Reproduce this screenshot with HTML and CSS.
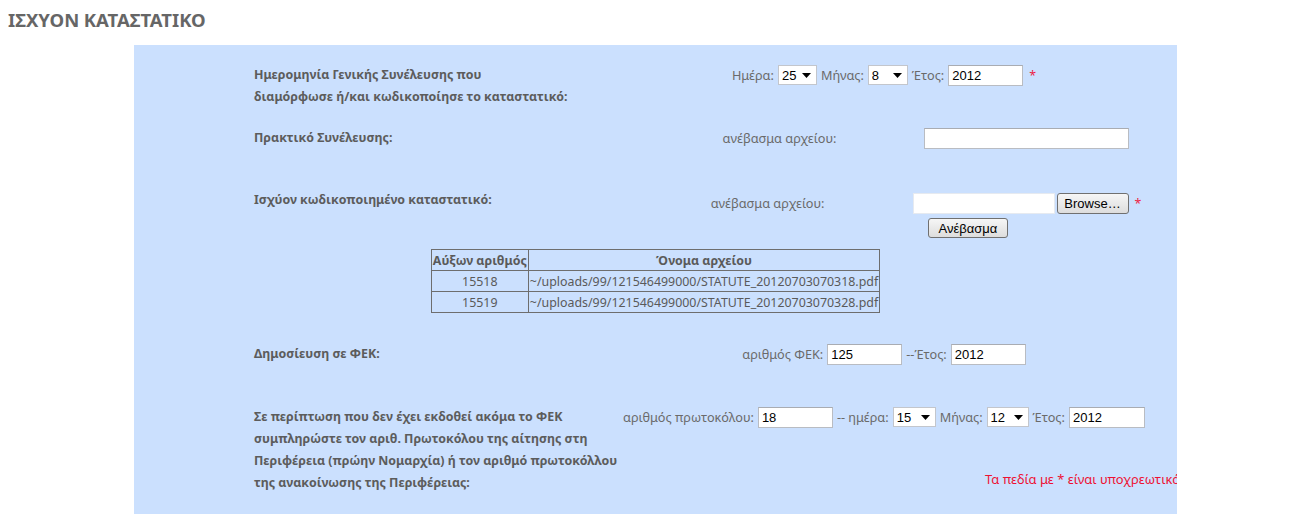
FILE: index.html
```html
<!DOCTYPE html>
<html lang="el">
<head>
    <meta charset="UTF-8">
    <meta name="viewport" content="width=device-width, initial-scale=1.0">
    <title>ΙΣΧΥΟΝ ΚΑΤΑΣΤΑΤΙΚΟ</title>
    <link rel="stylesheet" href="styles.css">
</head>
<body>
    <div class="page-title">ΙΣΧΥΟΝ ΚΑΤΑΣΤΑΤΙΚΟ</div>
    <div class="panel">
        <div class="form-row row-date">
            <div class="row-label">Ημερομηνία Γενικής Συνέλευσης που<br>διαμόρφωσε ή/και κωδικοποίησε το καταστατικό:</div>
            <div class="row-fields">
                <div class="field-line">
                    <span class="field-label">Ημέρα:</span>
                    <span class="select-wrap sel-day"><select class="select"><option>25</option></select><svg class="select-arrow" width="9" height="5" viewBox="0 0 9 5"><path d="M0 0h9L4.5 5z"/></svg></span>
                    <span class="field-label">Μήνας:</span>
                    <span class="select-wrap sel-month"><select class="select"><option>8</option></select><svg class="select-arrow" width="9" height="5" viewBox="0 0 9 5"><path d="M0 0h9L4.5 5z"/></svg></span>
                    <span class="field-label">Έτος:</span>
                    <input class="text-input w-year" type="text" value="2012">
                    <span class="required">*</span>
                </div>
            </div>
        </div>

        <div class="form-row row-minutes">
            <div class="row-label">Πρακτικό Συνέλευσης:</div>
            <div class="row-fields upload">
                <div class="field-line">
                    <span class="field-label upload-label">ανέβασμα αρχείου:</span>
                    <input class="text-input w-upload" type="text">
                </div>
            </div>
        </div>

        <div class="form-row row-statute">
            <div class="row-label">Ισχύον κωδικοποιημένο καταστατικό:</div>
            <div class="row-fields upload">
                <div class="field-line file-line">
                    <span class="field-label upload-label">ανέβασμα αρχείου:</span>
                    <span class="file-box">
                        <input class="text-input w-file" type="text">
                        <button class="btn btn-browse" type="button">Browse…</button>
                    </span>
                    <span class="required">*</span>
                </div>
                <div class="upload-action">
                    <button class="btn btn-upload" type="button">Ανέβασμα</button>
                </div>
            </div>
        </div>

        <table class="files">
            <tr>
                <th class="col-id">Αύξων αριθμός</th>
                <th>Όνομα αρχείου</th>
            </tr>
            <tr>
                <td class="col-id">15518</td>
                <td>~/uploads/99/121546499000/STATUTE_20120703070318.pdf</td>
            </tr>
            <tr>
                <td class="col-id">15519</td>
                <td>~/uploads/99/121546499000/STATUTE_20120703070328.pdf</td>
            </tr>
        </table>

        <div class="form-row row-fek">
            <div class="row-label">Δημοσίευση σε ΦΕΚ:</div>
            <div class="row-fields">
                <div class="field-line">
                    <span class="field-label">αριθμός ΦΕΚ:</span>
                    <input class="text-input w-year" type="text" value="125">
                    <span class="field-label">--Έτος:</span>
                    <input class="text-input w-year" type="text" value="2012">
                </div>
            </div>
        </div>

        <div class="form-row row-protocol">
            <div class="row-label">Σε περίπτωση που δεν έχει εκδοθεί ακόμα το ΦΕΚ<br>συμπληρώστε τον αριθ. Πρωτοκόλου της αίτησης στη<br>Περιφέρεια (πρώην Νομαρχία) ή τον αριθμό πρωτοκόλλου<br>της ανακοίνωσης της Περιφέρειας:</div>
            <div class="row-fields">
                <div class="field-line">
                    <span class="field-label">αριθμός πρωτοκόλου:</span>
                    <input class="text-input w-year" type="text" value="18">
                    <span class="field-label">-- ημέρα:</span>
                    <span class="select-wrap sel-day2"><select class="select"><option>15</option></select><svg class="select-arrow" width="9" height="5" viewBox="0 0 9 5"><path d="M0 0h9L4.5 5z"/></svg></span>
                    <span class="field-label">Μήνας:</span>
                    <span class="select-wrap sel-month2"><select class="select"><option>12</option></select><svg class="select-arrow" width="9" height="5" viewBox="0 0 9 5"><path d="M0 0h9L4.5 5z"/></svg></span>
                    <span class="field-label">Έτος:</span>
                    <input class="text-input w-year2" type="text" value="2012">
                </div>
                <div class="required-note">Τα πεδία με * είναι υποχρεωτικά</div>
            </div>
        </div>
    </div>
</body>
</html>
```

FILE: styles.css
```css
body {
    margin: 0;
    padding: 0;
    background-color: #ffffff;
    font-family: "Noto Sans", "Open Sans", sans-serif;
    font-size: 12.4px;
    color: #555555;
}
.page-title {
    font-size: 18.5px;
    font-weight: bold;
    color: #666666;
    padding: 9px 0 0 8px;
    height: 45px;
    box-sizing: border-box;
    line-height: 22px;
}
.panel {
    background-color: #cbe0fe;
    margin-left: 134px;
    width: 1043px;
    padding-top: 19px;
    padding-bottom: 20px;
    overflow: hidden;
}
.form-row {
    display: flex;
    padding-left: 120px;
}
.row-label {
    width: 366px;
    flex-shrink: 0;
    font-weight: bold;
    line-height: 22px;
    color: #5c5c5c;
    white-space: nowrap;
}
.row-fields {
    flex: 1;
    min-width: 0;
    display: flex;
    flex-direction: column;
    padding-right: 29px;
}
.row-fields.upload {
    padding-left: 55px;
    padding-right: 0;
}
.field-line {
    display: flex;
    align-items: center;
    justify-content: center;
    height: 22px;
    gap: 4px;
}
.field-label {
    color: #6a6a6a;
    white-space: nowrap;
    font-size: 12.7px;
}
.upload-label {
    margin-right: 84px;
}
.text-input {
    box-sizing: border-box;
    height: 21px;
    border: 1px solid #b9bcc2;
    border-top-color: #a9acb2;
    background: #ffffff;
    font-family: "Liberation Sans", Arial, sans-serif;
    font-size: 13px;
    color: #000000;
    padding: 0 3px;
    margin: 0;
    outline: none;
}
.w-year { width: 75px; }
.w-year2 { width: 76px; }
.w-upload { width: 205px; }
.w-file { width: 142px; border-color: #e6eaf0; }
.select-wrap {
    position: relative;
    display: inline-block;
}
.select {
    appearance: none;
    -webkit-appearance: none;
    box-sizing: border-box;
    height: 20px;
    border: 1px solid #c3c6cc;
    background: #ffffff;
    font-family: "Liberation Sans", Arial, sans-serif;
    font-size: 13px;
    color: #000000;
    padding: 0 0 0 3px;
    margin: 0;
    display: block;
}
.sel-day .select { width: 39px; }
.sel-month .select { width: 40px; }
.sel-day2 .select { width: 43px; }
.sel-month2 .select { width: 42px; }
.select-arrow {
    position: absolute;
    right: 6px;
    top: 8px;
    pointer-events: none;
}
.select-arrow path { fill: #000000; }
.required {
    color: #ee2244;
    margin-left: 2px;
}
.file-line {
    height: 24px;
    margin-top: 2px;
}
.file-box {
    display: flex;
    align-items: center;
    gap: 2px;
}
.btn {
    box-sizing: border-box;
    font-family: "Liberation Sans", Arial, sans-serif;
    font-size: 13px;
    color: #000000;
    background: linear-gradient(#f6f6f6, #dddddd);
    border: 1px solid #707070;
    border-radius: 3px;
    margin: 0;
    padding: 0;
}
.btn-browse {
    width: 72px;
    height: 21px;
}
.btn-upload {
    width: 80px;
    height: 20px;
}
.upload-action {
    margin-top: 3px;
    padding-left: 253px;
}
.files {
    border-collapse: collapse;
    margin: 11px auto 0;
    border: 1px solid #6e6e6e;
    color: #5a5a5a;
}
.files th,
.files td {
    border: 1px solid #6e6e6e;
    height: 20px;
    padding: 0 1px;
    white-space: nowrap;
}
.files th {
    font-weight: bold;
    text-align: center;
}
.files td {
    text-align: left;
}
.files .col-id {
    width: 94px;
    text-align: center;
}
.row-minutes { margin-top: 19px; }
.row-statute { margin-top: 40px; }
.row-fek { margin-top: 30px; }
.row-protocol { margin-top: 41px; }
.required-note {
    color: #ee1133;
    white-space: nowrap;
    margin-top: 40px;
    padding-left: 365px;
    line-height: 22px;
    font-size: 12.9px;
}
```
